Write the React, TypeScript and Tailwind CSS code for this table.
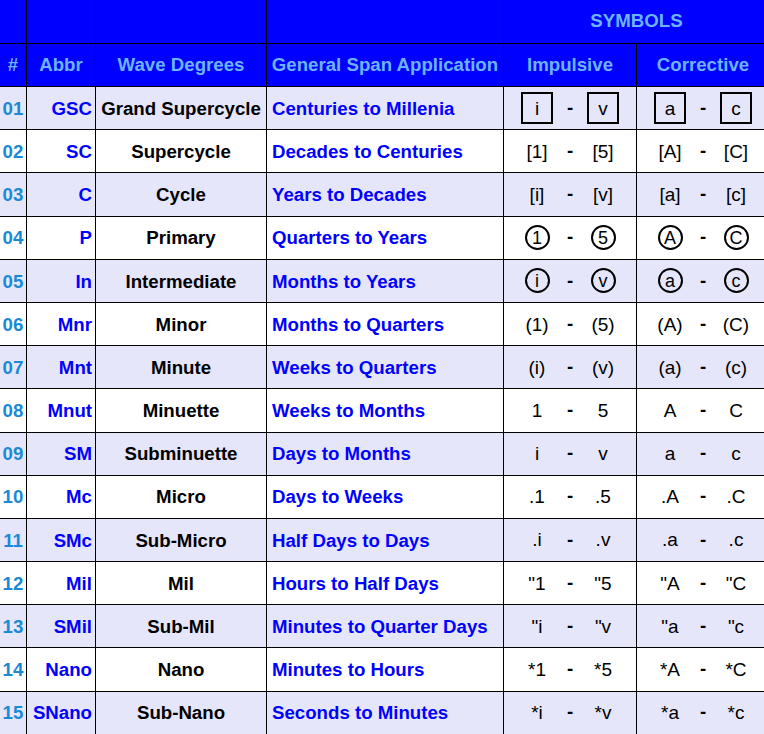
type Kind = 'box' | 'circle' | 'text'

type Row = {
  num: string
  abbr: string
  degree: string
  span: string
  kind: Kind
  imp: [string, string]
  cor: [string, string]
}

const rows: Row[] = [
  { num: '01', abbr: 'GSC', degree: 'Grand Supercycle', span: 'Centuries to Millenia', kind: 'box', imp: ['i', 'v'], cor: ['a', 'c'] },
  { num: '02', abbr: 'SC', degree: 'Supercycle', span: 'Decades to Centuries', kind: 'text', imp: ['[1]', '[5]'], cor: ['[A]', '[C]'] },
  { num: '03', abbr: 'C', degree: 'Cycle', span: 'Years to Decades', kind: 'text', imp: ['[i]', '[v]'], cor: ['[a]', '[c]'] },
  { num: '04', abbr: 'P', degree: 'Primary', span: 'Quarters to Years', kind: 'circle', imp: ['1', '5'], cor: ['A', 'C'] },
  { num: '05', abbr: 'In', degree: 'Intermediate', span: 'Months to Years', kind: 'circle', imp: ['i', 'v'], cor: ['a', 'c'] },
  { num: '06', abbr: 'Mnr', degree: 'Minor', span: 'Months to Quarters', kind: 'text', imp: ['(1)', '(5)'], cor: ['(A)', '(C)'] },
  { num: '07', abbr: 'Mnt', degree: 'Minute', span: 'Weeks to Quarters', kind: 'text', imp: ['(i)', '(v)'], cor: ['(a)', '(c)'] },
  { num: '08', abbr: 'Mnut', degree: 'Minuette', span: 'Weeks to Months', kind: 'text', imp: ['1', '5'], cor: ['A', 'C'] },
  { num: '09', abbr: 'SM', degree: 'Subminuette', span: 'Days to Months', kind: 'text', imp: ['i', 'v'], cor: ['a', 'c'] },
  { num: '10', abbr: 'Mc', degree: 'Micro', span: 'Days to Weeks', kind: 'text', imp: ['.1', '.5'], cor: ['.A', '.C'] },
  { num: '11', abbr: 'SMc', degree: 'Sub-Micro', span: 'Half Days to Days', kind: 'text', imp: ['.i', '.v'], cor: ['.a', '.c'] },
  { num: '12', abbr: 'Mil', degree: 'Mil', span: 'Hours to Half Days', kind: 'text', imp: ['"1', '"5'], cor: ['"A', '"C'] },
  { num: '13', abbr: 'SMil', degree: 'Sub-Mil', span: 'Minutes to Quarter Days', kind: 'text', imp: ['"i', '"v'], cor: ['"a', '"c'] },
  { num: '14', abbr: 'Nano', degree: 'Nano', span: 'Minutes to Hours', kind: 'text', imp: ['*1', '*5'], cor: ['*A', '*C'] },
  { num: '15', abbr: 'SNano', degree: 'Sub-Nano', span: 'Seconds to Minutes', kind: 'text', imp: ['*i', '*v'], cor: ['*a', '*c'] },
]

function Sym({ kind, label }: { kind: Kind; label: string }) {
  if (kind === 'box') {
    return (
      <span className="w-[32px] h-[32px] shrink-0 border-2 border-black flex items-center justify-center text-[19px] font-normal">
        {label}
      </span>
    )
  }
  if (kind === 'circle') {
    return (
      <span className="w-[25px] h-[25px] shrink-0 rounded-full border-2 border-black flex items-center justify-center text-[18px] font-normal leading-none">
        {label}
      </span>
    )
  }
  return <span className="text-[19px] font-normal whitespace-nowrap">{label}</span>
}

function SymbolPair({ kind, pair }: { kind: Kind; pair: [string, string] }) {
  return (
    <div className="flex items-center justify-center h-full">
      <div className="w-[33px] flex justify-center">
        <Sym kind={kind} label={pair[0]} />
      </div>
      <div className="w-[33px] flex justify-center font-bold text-[18.67px]">-</div>
      <div className="w-[33px] flex justify-center">
        <Sym kind={kind} label={pair[1]} />
      </div>
    </div>
  )
}

export default function App() {
  const headText = 'text-[#6cb4ff]'

  return (
    <div className="w-[764px] h-[734px] overflow-hidden bg-white font-['Liberation_Sans',Arial,sans-serif] font-bold text-[18.67px] leading-none">
      <div className="w-[769px]">
        {/* header: top row */}
        <div className="flex h-[44px] bg-[#0000ff] border-b border-black">
          <div className="w-[27px] border-r border-black" />
          <div className="w-[69px] border-r border-black" />
          <div className="w-[171px] border-r border-black" />
          <div className="w-[237px] border-r border-black" />
          <div className={`w-[265px] flex items-center justify-center ${headText}`}>SYMBOLS</div>
        </div>

        {/* header: column titles */}
        <div className={`flex h-[43px] bg-[#0000ff] border-b border-black ${headText}`}>
          <div className="w-[27px] border-r border-black flex items-center justify-center">#</div>
          <div className="w-[69px] border-r border-black flex items-center justify-center">Abbr</div>
          <div className="w-[171px] border-r border-black flex items-center justify-center">Wave Degrees</div>
          <div className="w-[237px] border-r border-black flex items-center justify-center whitespace-nowrap">General Span Application</div>
          <div className="w-[133px] border-r border-black flex items-center justify-center">Impulsive</div>
          <div className="w-[132px] flex items-center justify-center">Corrective</div>
        </div>

        {rows.map((r, i) => (
          <div
            key={r.num}
            className={`flex h-[43.2px] border-b border-black ${i % 2 === 0 ? 'bg-[#e6e6fa]' : 'bg-white'}`}
          >
            <div className="w-[27px] border-r border-black flex items-center justify-center pt-[2px] text-[#1a8ad6]">{r.num}</div>
            <div className="w-[69px] border-r border-black flex items-center justify-end pr-[3px] pt-[2px] text-[#0000ff]">{r.abbr}</div>
            <div className="w-[171px] border-r border-black flex items-center justify-center pt-[2px] text-black whitespace-nowrap">{r.degree}</div>
            <div className="w-[237px] border-r border-black flex items-center pl-[5px] pt-[2px] text-[#0000ff] whitespace-nowrap">{r.span}</div>
            <div className="w-[133px] border-r border-black text-black">
              <SymbolPair kind={r.kind} pair={r.imp} />
            </div>
            <div className="w-[132px] text-black">
              <SymbolPair kind={r.kind} pair={r.cor} />
            </div>
          </div>
        ))}
      </div>
    </div>
  )
}
